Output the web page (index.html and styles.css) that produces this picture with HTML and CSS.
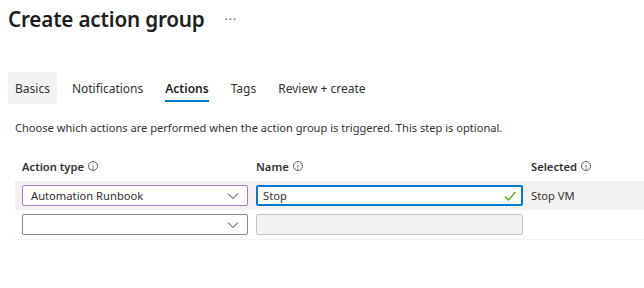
FILE: index.html
```html
<!DOCTYPE html>
<html lang="en">
<head>
    <meta charset="UTF-8">
    <title>Create action group</title>
    <link rel="stylesheet" href="styles.css">
</head>
<body>
    <header class="page-header">
        <h1>Create action group</h1>
        <span class="more">&middot;&middot;&middot;</span>
    </header>
    <nav class="tabs">
        <a class="tab hovered">Basics</a>
        <a class="tab">Notifications</a>
        <a class="tab active">Actions</a>
        <a class="tab">Tags</a>
        <a class="tab">Review + create</a>
    </nav>
    <p class="intro">Choose which actions are performed when the action group is triggered. This step is optional.</p>
    <div class="grid">
        <div class="grid-head">
            <span class="col-label">Action type <i class="info">i</i></span>
            <span class="col-label">Name <i class="info">i</i></span>
            <span class="col-label">Selected <i class="info">i</i></span>
        </div>
        <div class="grid-row selected">
            <div class="dropdown focused">
                <span>Automation Runbook</span>
                <svg class="chevron" viewBox="0 0 12 8" width="12" height="8"><path d="M1 1.5l5 5 5-5" fill="none" stroke="#323130" stroke-width="1"/></svg>
            </div>
            <div class="textbox active-box">
                <span>Stop</span>
                <svg class="check" viewBox="0 0 12 10" width="12" height="10"><path d="M1 5.5l3.5 3.5 7-8" fill="none" stroke="#57a300" stroke-width="1.2"/></svg>
            </div>
            <div class="value">Stop VM</div>
        </div>
        <div class="grid-row">
            <div class="dropdown">
                <span></span>
                <svg class="chevron" viewBox="0 0 12 8" width="12" height="8"><path d="M1 1.5l5 5 5-5" fill="none" stroke="#323130" stroke-width="1"/></svg>
            </div>
            <div class="textbox disabled"></div>
            <div class="value"></div>
        </div>
    </div>
</body>
</html>
```

FILE: styles.css
```css
body { font-family: "Noto Sans", "Open Sans", sans-serif; margin: 0; background: #fff; color: #323130; overflow: hidden; }
.page-header { display: flex; align-items: center; padding: 2px 8px 0; height: 34px; }
.page-header h1 { font-size: 20.7px; font-weight: 600; margin: 0; color: #201f1e; letter-spacing: -0.2px; }
.more { margin-left: 20px; font-size: 12px; color: #605e5c; letter-spacing: 1px; }
.tabs { display: flex; margin: 36px 0 0 8px; height: 32px; }
.tab { display: flex; align-items: center; padding: 0 7px; margin-right: 8px; font-size: 12px; color: #323130; position: relative; }
.tab.hovered { background: #f3f2f1; }
.tab.active { font-weight: 600; color: #201f1e; }
.tab.active::after { content: ""; position: absolute; left: 7px; right: 7px; bottom: 2px; height: 2px; background: #0078d4; }
.intro { font-size: 11.1px; margin: 16px 0 0 15px; color: #323130; }
.grid { margin: 19px 0 0 15px; }
.grid-head, .grid-row { display: grid; grid-template-columns: 226px 267px 1fr; column-gap: 8px; padding-left: 7px; align-items: center; }
.grid-head { height: 27px; padding-bottom: 3px; box-sizing: border-box; }
.col-label { font-size: 11.2px; font-weight: 600; color: #323130; display: flex; align-items: center; gap: 4px; }
.info { font-style: normal; font-weight: 400; font-size: 8px; width: 10px; height: 10px; border: 1px solid #605e5c; border-radius: 50%; display: inline-flex; align-items: center; justify-content: center; box-sizing: border-box; color: #605e5c; }
.grid-row { height: 29px; }
.grid-row.selected { background: #f3f2f1; }
.grid-row:last-child { border-bottom: 1px solid #f3f2f1; }
.dropdown, .textbox { height: 21px; box-sizing: border-box; border: 1px solid #8a8886; border-radius: 2px; background: #fff; display: flex; align-items: center; justify-content: space-between; padding: 0 8px; font-size: 11.2px; }
.dropdown.focused { border-color: #a57ec7; }
.textbox.active-box { border: 2px solid #0078d4; padding: 0 5px; }
.textbox.disabled { background: #f3f2f1; border-color: #c8c6c4; }
.value { font-size: 11.2px; }
```
